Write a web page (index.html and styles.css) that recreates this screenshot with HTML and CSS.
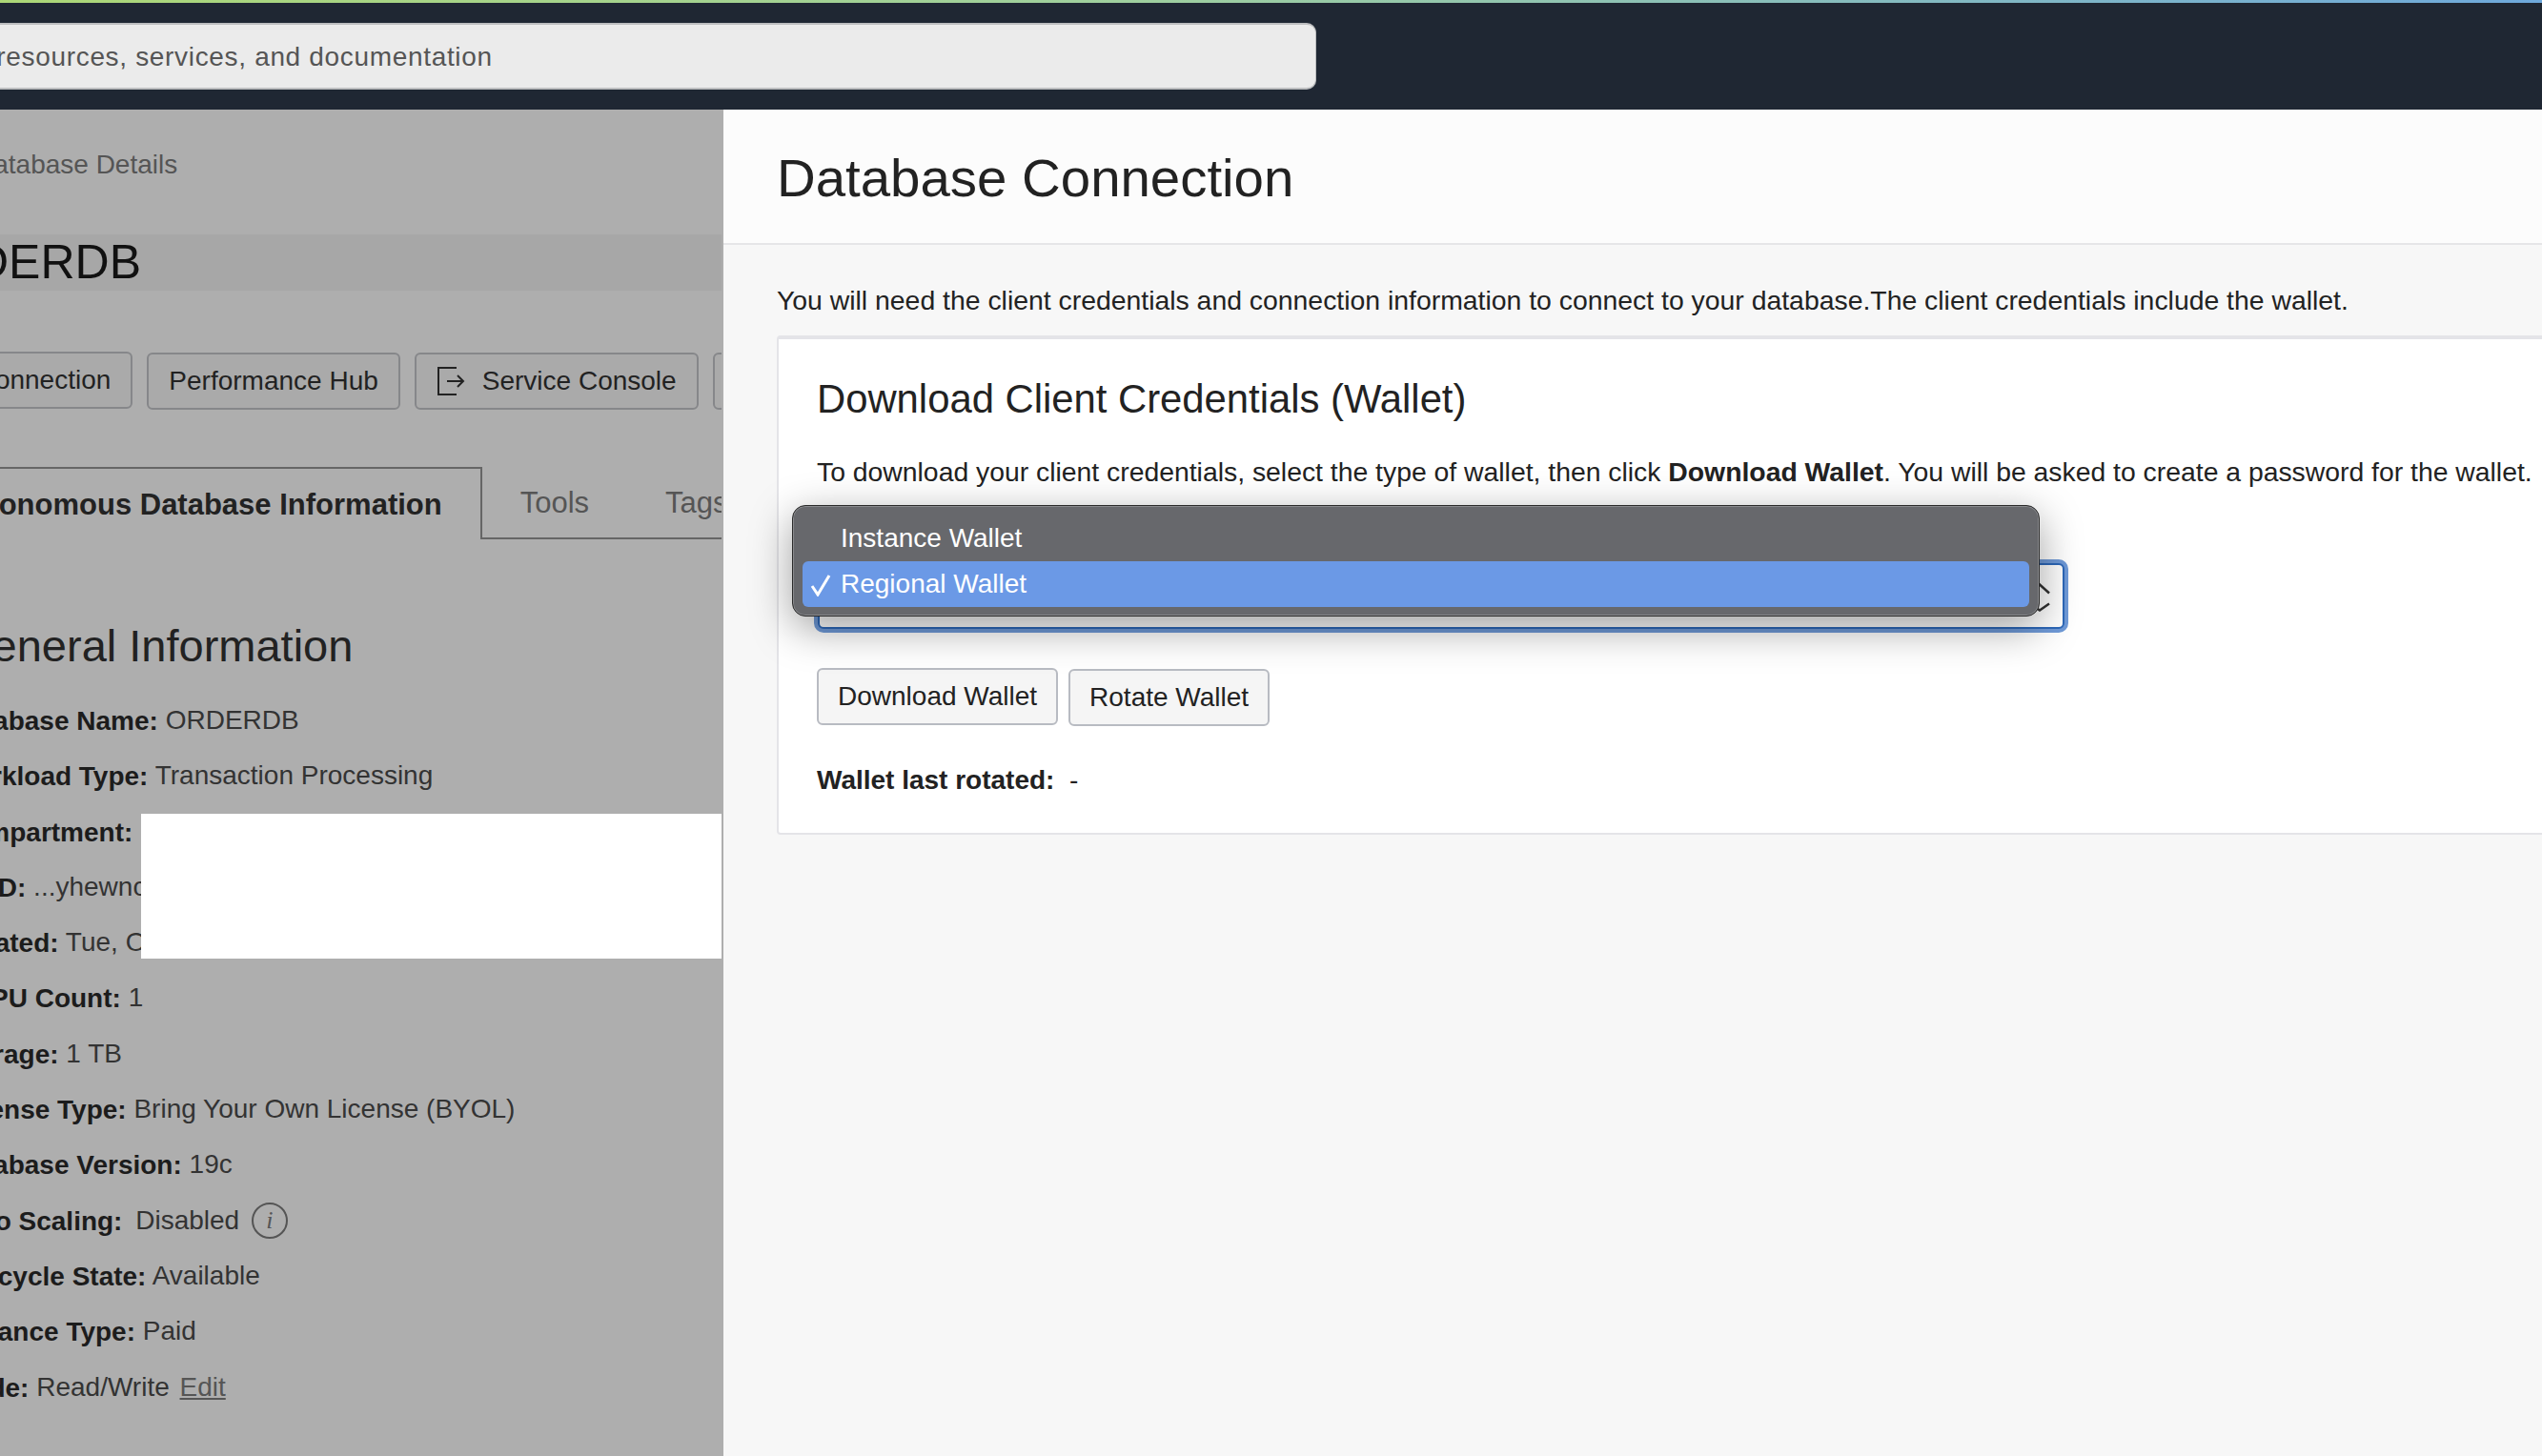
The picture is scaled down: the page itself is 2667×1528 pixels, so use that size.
FILE: index.html
```html
<!DOCTYPE html>
<html lang="en">
<head>
<meta charset="UTF-8">
<meta name="viewport" content="width=device-width, initial-scale=1.0">
<title>Database Connection</title>
<link rel="stylesheet" href="styles.css">
</head>
<body>
<header class="topbar">
    <div class="search">Search for resources, services, and documentation</div>
</header>
<div class="page">
    <aside class="side">
        <div class="side-inner">
            <div class="crumb">Autonomous Database Details</div>
            <h1 class="db-title">ORDERDB</h1>
            <div class="actions">
                <button class="btn btn-first">DB Connection</button>
                <button class="btn">Performance Hub</button>
                <button class="btn">
                    <svg class="exit-icon" width="30" height="30" viewBox="0 0 30 30" fill="none" stroke="#222" stroke-width="2">
                        <path d="M21 1H2V29H21"/>
                        <path d="M11 15H28M22 9l6 6-6 6"/>
                    </svg>
                    Service Console
                </button>
                <button class="btn">Stop</button>
            </div>
            <div class="tabs">
                <div class="tab tab-active">Autonomous Database Information</div>
                <div class="tab">Tools</div>
                <div class="tab">Tags</div>
                <div class="tab-rest"></div>
            </div>
            <h2 class="section-title">General Information</h2>
            <div class="info">
                <div class="row"><b>Database Name:</b> ORDERDB</div>
                <div class="row"><b>Workload Type:</b> Transaction Processing</div>
                <div class="row"><b>Compartment:</b></div>
                <div class="row"><b>OCID:</b> ...yhewnc</div>
                <div class="row"><b>Created:</b> Tue, Oct</div>
                <div class="row"><b>OCPU Count:</b> 1</div>
                <div class="row"><b>Storage:</b> 1 TB</div>
                <div class="row"><b>License Type:</b> Bring Your Own License (BYOL)</div>
                <div class="row"><b>Database Version:</b> 19c</div>
                <div class="row"><b>Auto Scaling:</b> <span class="gap">Disabled</span> <span class="info-icon">i</span></div>
                <div class="row"><b>Lifecycle State:</b> Available</div>
                <div class="row"><b>Instance Type:</b> Paid</div>
                <div class="row"><b>Mode:</b> Read/Write <a class="edit" href="#">Edit</a></div>
            </div>
            <div class="redact"></div>
        </div>
    </aside>
    <main class="main">
        <div class="main-head">
            <h1>Database Connection</h1>
        </div>
        <div class="main-body">
            <p class="intro">You will need the client credentials and connection information to connect to your database.The client credentials include the wallet.</p>
            <section class="card">
                <h2>Download Client Credentials (Wallet)</h2>
                <p class="card-text">To download your client credentials, select the type of wallet, then click <b>Download Wallet</b>. You will be asked to create a password for the wallet.</p>
                <div class="select">
                    <svg class="select-arrows" width="22" height="32" viewBox="0 0 22 32" fill="none" stroke="#333" stroke-width="2.5">
                        <path d="M1 12.5L11 3.5L21 12.5"/>
                        <path d="M1 23.5L11 30.5L21 23.5"/>
                    </svg>
                </div>
                <div class="wallet-btns">
                    <button class="btn btn-light">Download Wallet</button>
                    <button class="btn btn-light btn-rotate">Rotate Wallet</button>
                </div>
                <p class="rotated"><b>Wallet last rotated:</b>&nbsp; -</p>
                <div class="menu">
                    <div class="menu-item">Instance Wallet</div>
                    <div class="menu-item menu-selected">
                        <svg class="check" width="22" height="24" viewBox="0 0 22 24" fill="none" stroke="#fff" stroke-width="3">
                            <path d="M2 13l6 9L20 2"/>
                        </svg>
                        Regional Wallet
                    </div>
                </div>
            </section>
        </div>
    </main>
</div>
</body>
</html>
```

FILE: styles.css
```css
* {
    box-sizing: border-box;
}

html, body {
    height: 100%;
}

body {
    margin: 0;
    overflow: hidden;
    font-family: "Liberation Sans", Arial, sans-serif;
    font-size: 28px;
    color: #222;
    background: #f7f7f7;
}

.topbar {
    height: 115px;
    padding-top: 21px;
    background: #1f2733;
    border-top: 3px solid;
    border-image: linear-gradient(90deg, #acd777, #9fcf9f 45%, #6ea9dc) 1;
    overflow: hidden;
}

.search {
    width: 1381px;
    height: 70px;
    padding-left: 1px;
    line-height: 68px;
    letter-spacing: .67px;
    color: #555;
    background: #ebebeb;
    border-top: 2px solid #bcbdbf;
    border-bottom: 2px solid #bcbdbf;
    border-right: 1px solid #bcbdbf;
    border-radius: 0 10px 10px 0;
    text-indent: -149px;
    white-space: nowrap;
    overflow: hidden;
}

.page {
    display: flex;
    height: 1413px;
}

.side {
    flex: none;
    width: 759px;
    background: #aeaeae;
}

.side-inner {
    position: relative;
    width: 757px;
    height: 100%;
    padding-top: 38px;
    overflow: hidden;
}

.crumb {
    margin-left: -192px;
    line-height: 40px;
    color: #555;
    white-space: nowrap;
}

.db-title {
    height: 59px;
    margin: 53px 0 0;
    font-size: 50px;
    font-weight: 400;
    line-height: 59px;
    color: #111;
    text-indent: -102px;
    background: #a7a7a7;
    white-space: nowrap;
}

.actions {
    display: flex;
    gap: 15px;
    align-items: flex-start;
    margin: 65px 0 0 -95px;
}

.btn {
    flex: none;
    display: flex;
    align-items: center;
    height: 60px;
    padding: 0 21px;
    font-family: inherit;
    font-size: 28px;
    color: #222;
    background: #aaa;
    border: 2px solid #86878a;
    border-radius: 6px;
}

.btn-first {
    margin-top: -1px;
}

.exit-icon {
    margin-right: 18px;
}

.tabs {
    display: flex;
    height: 76px;
    margin: 60px 0 0 -93px;
}

.tab {
    flex: none;
    padding: 0 40px;
    line-height: 76px;
    font-size: 31px;
    color: #555;
    border-bottom: 2px solid #666;
    white-space: nowrap;
}

.tab-active {
    color: #222;
    font-weight: 700;
    border-top: 2px solid #666;
    border-right: 2px solid #666;
    border-bottom: none;
}

.tab-rest {
    flex: 1;
    border-bottom: 2px solid #666;
}

.section-title {
    margin: 82px 0 0 -45px;
    font-size: 47px;
    font-weight: 400;
    line-height: 60px;
    color: #222;
}

.info {
    margin: 19px 0 0 -52px;
}

.row {
    height: 58.3px;
    line-height: 58.3px;
    color: #333;
    white-space: nowrap;
}

.row b {
    color: #1c1c1c;
    vertical-align: -1px;
}

.gap {
    margin-left: 6px;
}

.info-icon {
    display: inline-block;
    width: 38px;
    height: 38px;
    margin-left: 5px;
    font-family: "Liberation Serif", serif;
    font-style: italic;
    font-size: 26px;
    line-height: 34px;
    text-align: center;
    color: #555;
    border: 2px solid #555;
    border-radius: 50%;
    vertical-align: 1px;
}

.edit {
    margin-left: 3px;
    color: #555;
}

.redact {
    position: absolute;
    left: 148px;
    top: 739px;
    width: 609px;
    height: 152px;
    background: #fff;
}

.main {
    flex: 1;
    min-width: 0;
    overflow: hidden;
}

.main-head {
    height: 142px;
    padding: 42px 0 0 56px;
    background: #fcfcfc;
    border-bottom: 2px solid #e6e6e8;
}

.main-head h1 {
    margin: 0;
    font-size: 56.4px;
    font-weight: 400;
    line-height: 60px;
    color: #222;
}

.main-body {
    padding: 0 0 0 56px;
}

.intro {
    margin: 0;
    padding-top: 38px;
    font-size: 28.38px;
    line-height: 40px;
    white-space: nowrap;
}

.card {
    position: relative;
    height: 524px;
    margin: 17px -10px 0 0;
    padding: 0 0 0 40px;
    background: #fff;
    border: 2px solid #e4e4e8;
    border-top-width: 4px;
    border-radius: 4px;
}

.card h2 {
    margin: 0;
    padding-top: 39px;
    font-size: 41.8px;
    font-weight: 400;
    line-height: 48px;
}

.card-text {
    margin: 32px 0 0;
    font-size: 28.35px;
    line-height: 40px;
    white-space: nowrap;
}

.select {
    display: flex;
    align-items: center;
    justify-content: flex-end;
    width: 1308px;
    height: 69px;
    margin: 76px 0 0 1px;
    padding-right: 13px;
    background: #fff;
    border: 2px solid #2d68b9;
    border-radius: 6px;
    box-shadow: 0 0 0 4px #6f9ad8;
}

.wallet-btns {
    display: flex;
    gap: 11px;
    margin-top: 41px;
}

.btn-light {
    padding: 0 20px;
    background: #f5f5f5;
    border-color: #b8bbc2;
}

.btn-rotate {
    margin-top: 1px;
}

.rotated {
    margin: 37px 0 0;
    line-height: 40px;
}

.menu {
    position: absolute;
    left: 14px;
    top: 174px;
    width: 1309px;
    height: 117px;
    padding: 10px;
    background: #67686c;
    border: 1px solid #2a2a2a;
    border-radius: 14px;
    box-shadow: inset 0 0 0 1px #8a8b8e, 0 12px 44px rgba(0, 0, 0, .38);
}

.menu-item {
    position: relative;
    height: 48px;
    padding-left: 40px;
    line-height: 48px;
    color: #fff;
}

.menu-selected {
    background: #6b99e6;
    border-radius: 6px;
}

.check {
    position: absolute;
    left: 8px;
    top: 13px;
}
```
